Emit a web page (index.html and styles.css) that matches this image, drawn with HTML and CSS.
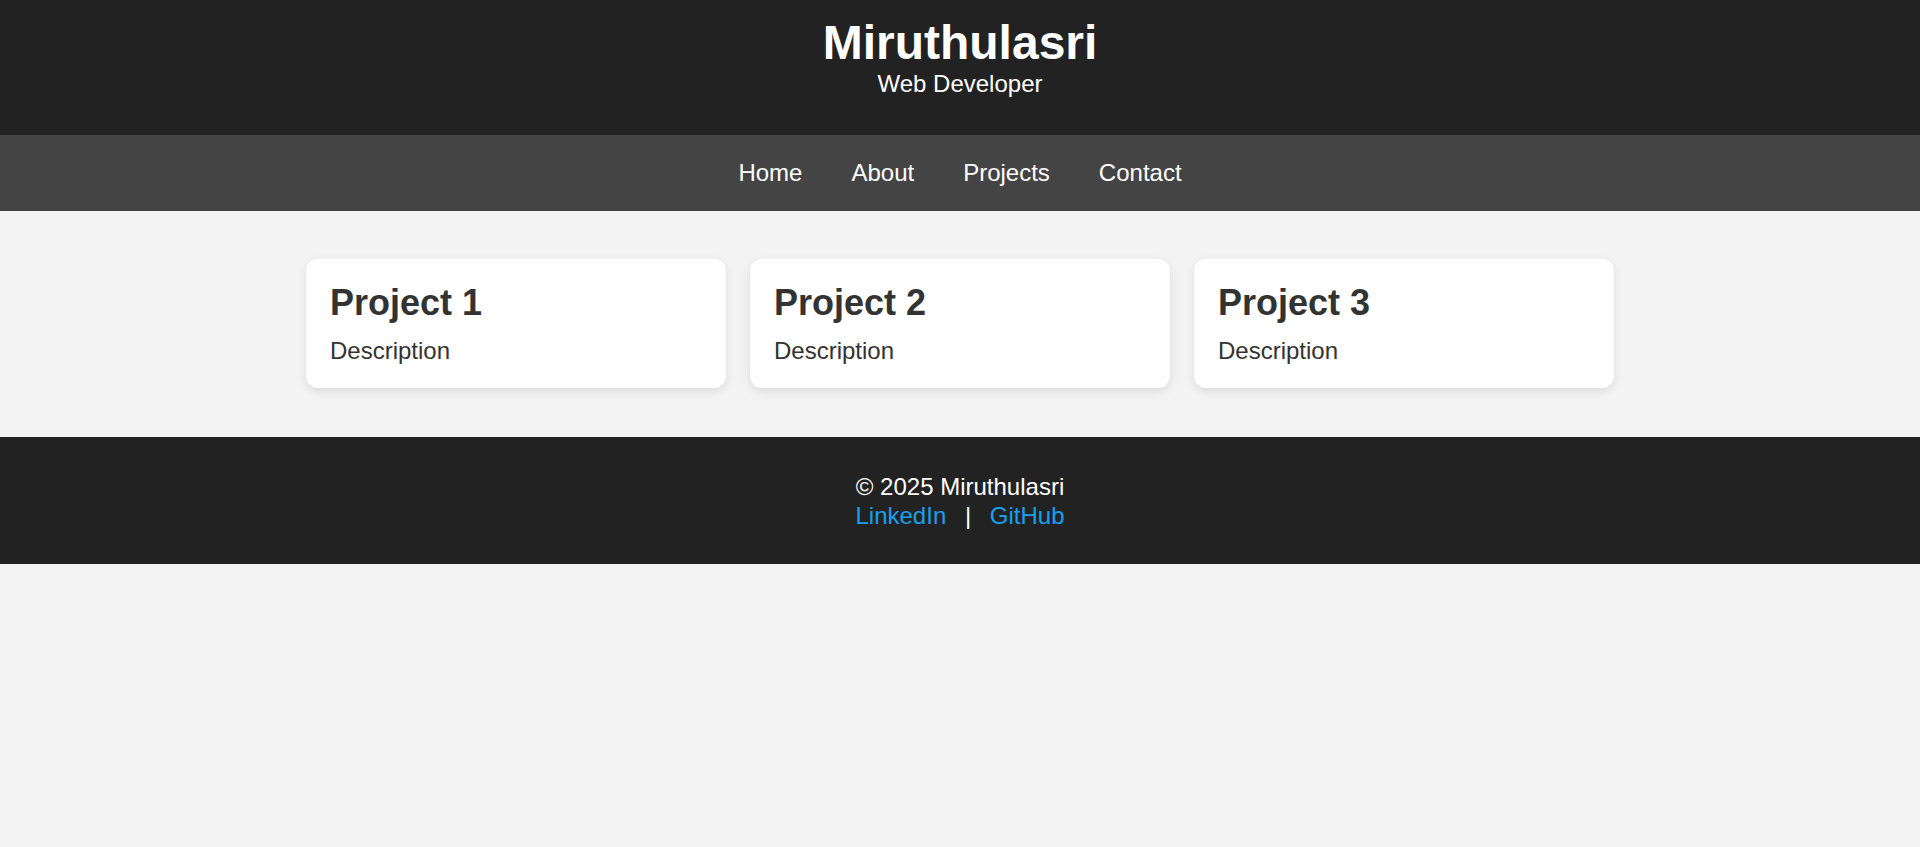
FILE: index.html
```html
<!DOCTYPE html>
<html lang="en">
<head>
<meta charset="utf-8">
<title>Miruthulasri</title>
<link rel="stylesheet" href="styles.css">
</head>
<body>
<header class="site-header">
  <h1 class="site-title">Miruthulasri</h1>
  <p class="site-subtitle">Web Developer</p>
</header>
<nav class="site-nav">
  <a href="#" class="nav-link">Home</a>
  <a href="#" class="nav-link">About</a>
  <a href="#" class="nav-link">Projects</a>
  <a href="#" class="nav-link">Contact</a>
</nav>
<main class="content">
  <div class="projects">
    <div class="card">
      <h2 class="card-title">Project 1</h2>
      <p class="card-text">Description</p>
    </div>
    <div class="card">
      <h2 class="card-title">Project 2</h2>
      <p class="card-text">Description</p>
    </div>
    <div class="card">
      <h2 class="card-title">Project 3</h2>
      <p class="card-text">Description</p>
    </div>
  </div>
</main>
<footer class="site-footer">
  <p class="footer-line">© 2025 Miruthulasri</p>
  <p class="footer-line"><a href="#" class="footer-link">LinkedIn</a> | <a href="#" class="footer-link">GitHub</a></p>
</footer>
</body>
</html>
```
FILE: styles.css
```css
* { box-sizing: border-box; }
html, body { margin: 0; padding: 0; }
body {
  font-family: "Liberation Sans", Arial, sans-serif;
  font-size: 24px;
  background: #f3f3f3;
  color: #333;
}
.site-header {
  background: #222;
  color: #fff;
  text-align: center;
  padding: 15px 0 0;
  height: 135px;
}
.site-title {
  margin: 0;
  font-size: 48px;
  font-weight: bold;
  line-height: 55px;
}
.site-subtitle {
  margin: 0;
  line-height: 28px;
}
.site-nav {
  background: #444;
  height: 76px;
  display: flex;
  justify-content: center;
  align-items: center;
  gap: 49px;
}
.nav-link {
  color: #fff;
  text-decoration: none;
  line-height: 28px;
}
.content {
  padding: 48px 0 49px;
}
.projects {
  max-width: 1308px;
  margin: 0 auto;
  display: grid;
  grid-template-columns: repeat(3, 1fr);
  gap: 24px;
}
.card {
  background: #fff;
  border-radius: 12px;
  box-shadow: 0 3px 10px rgba(0, 0, 0, 0.1);
  padding: 23px 24px 0;
  height: 129px;
}
.card-title {
  margin: 0 0 14px;
  font-size: 36px;
  line-height: 41px;
  color: #333;
}
.card-text {
  margin: 0;
  line-height: 28px;
  color: #333;
}
.site-footer {
  background: #222;
  color: #fff;
  text-align: center;
  padding: 35px 0 0;
  height: 127px;
}
.footer-line {
  margin: 0;
  line-height: 29px;
}
.footer-link {
  color: #18a0f0;
  text-decoration: none;
  margin: 0 12px;
}
```
